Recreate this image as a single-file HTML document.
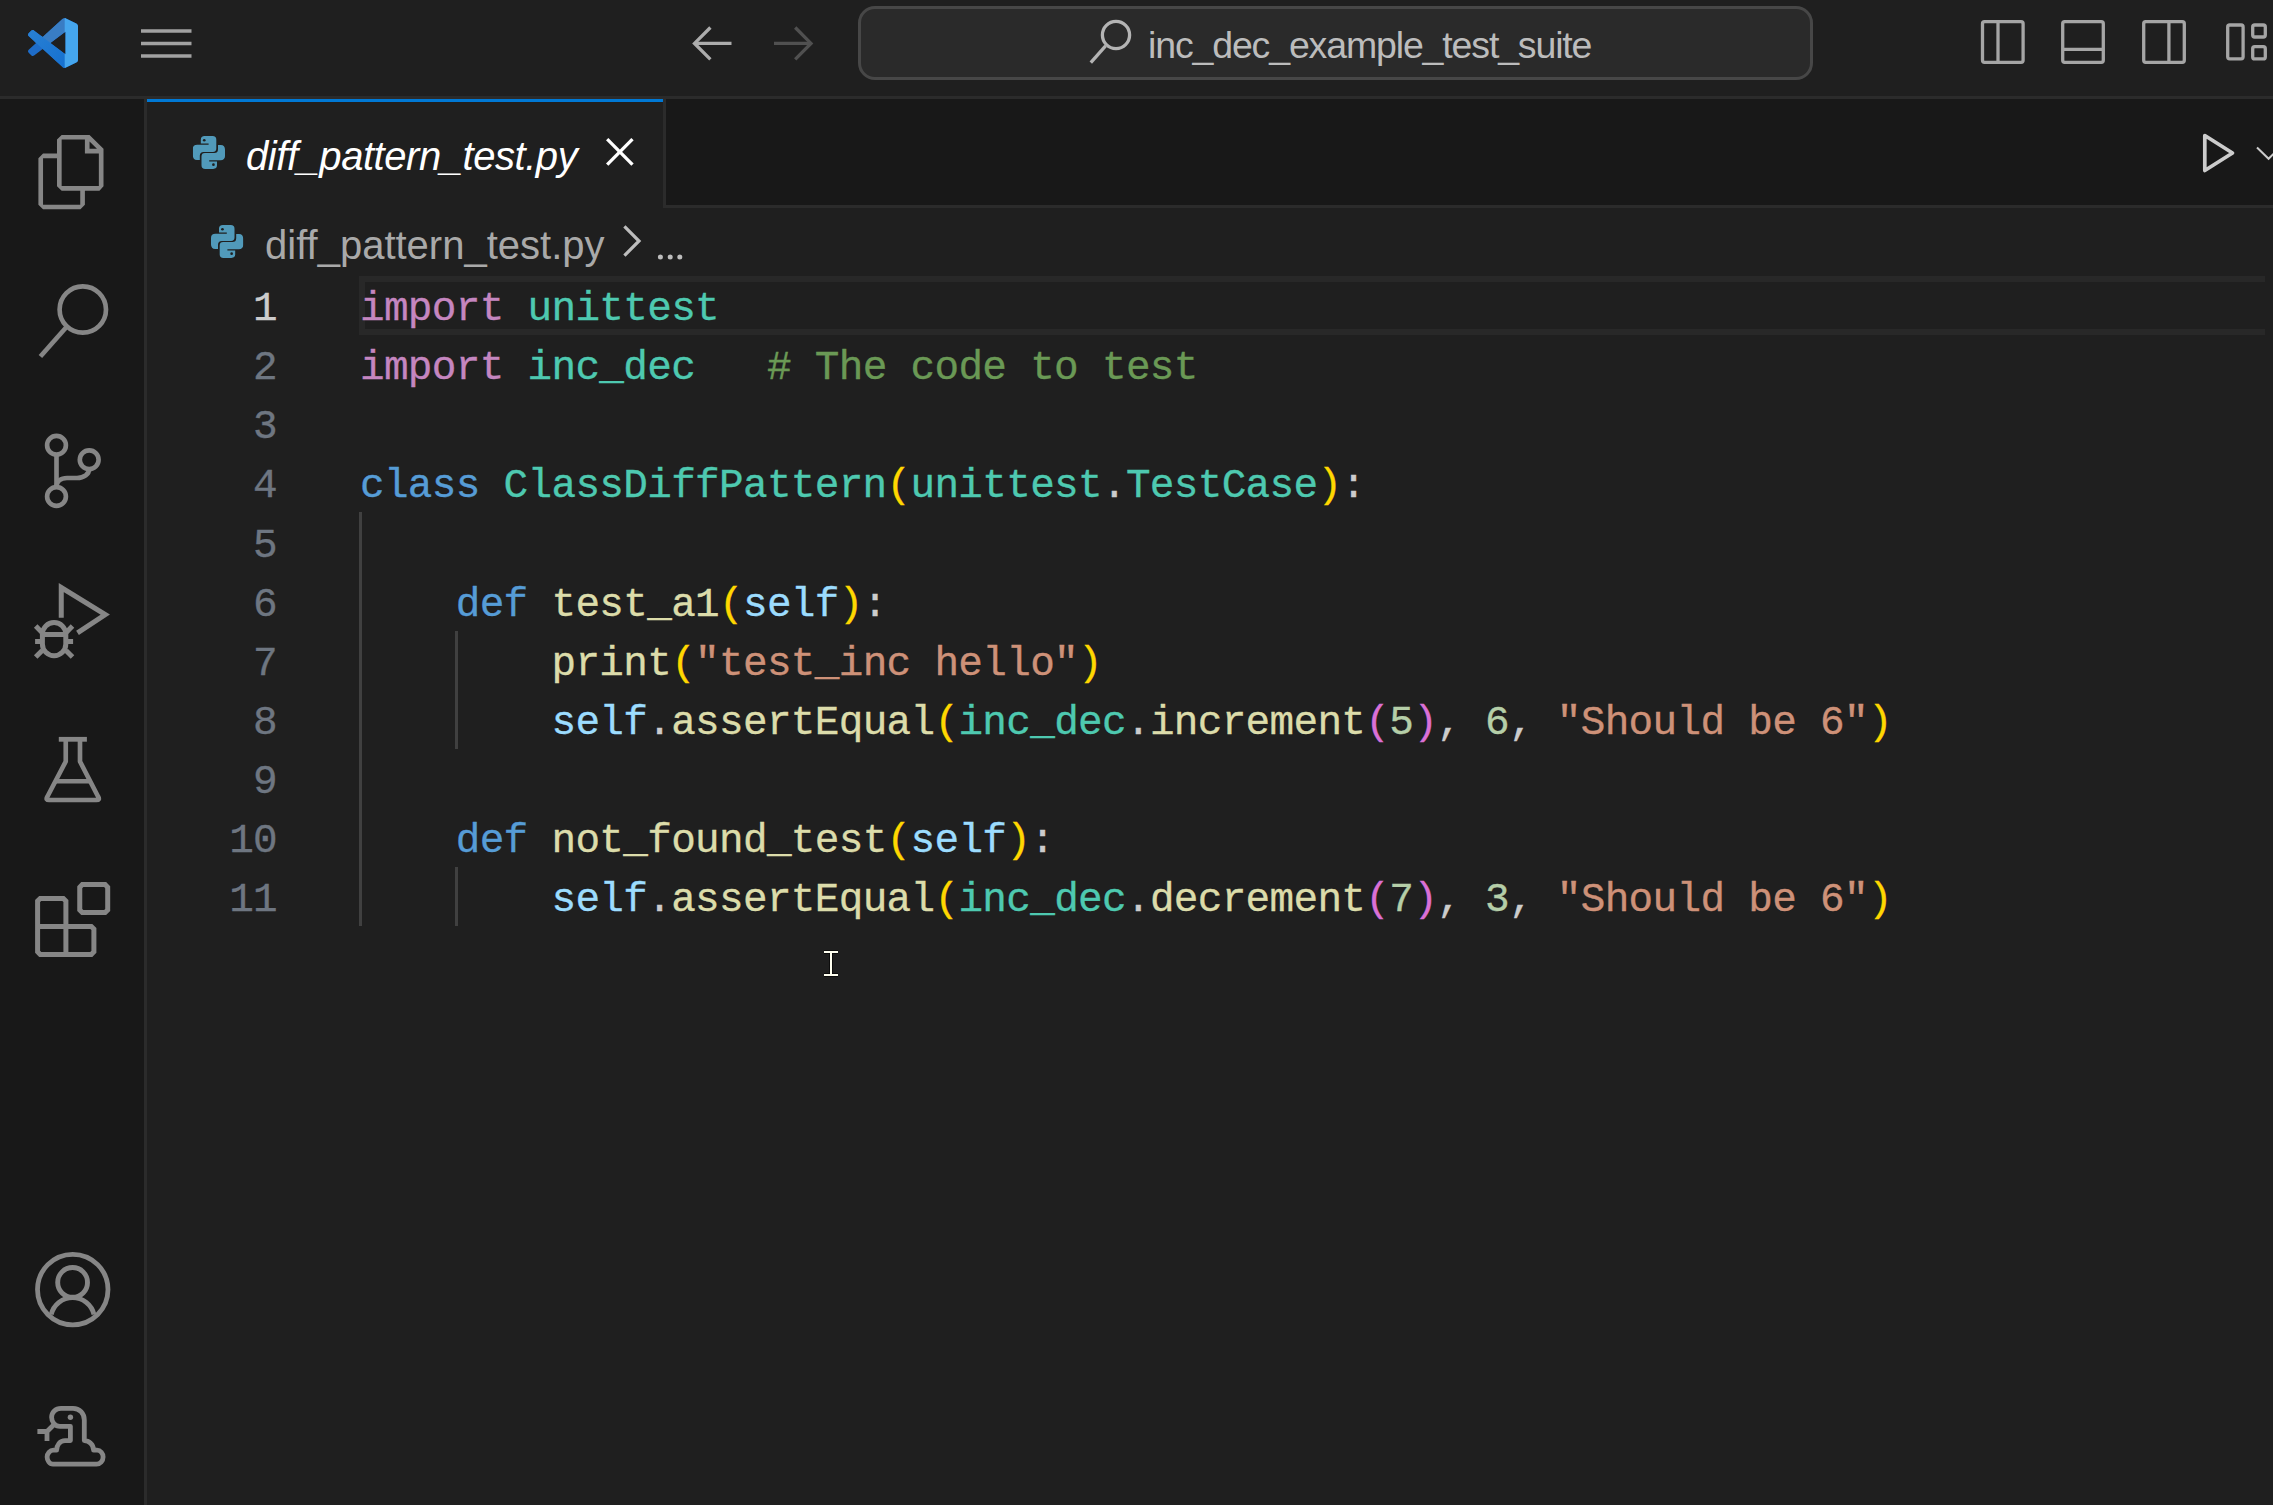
<!DOCTYPE html>
<html><head><meta charset="utf-8">
<style>
html,body{margin:0;padding:0;}
body{width:2273px;height:1505px;overflow:hidden;background:#1f1f1f;position:relative;font-family:"Liberation Sans",sans-serif;}
.abs{position:absolute;}
#titlebar{left:0;top:0;width:2273px;height:96px;background:#1f1f1f;}
#tb-border{left:0;top:96px;width:2273px;height:3px;background:#2b2b2b;}
#actbar{left:0;top:99px;width:144px;height:1406px;background:#181818;}
#act-border{left:144px;top:99px;width:3px;height:1406px;background:#2b2b2b;}
#tabs{left:147px;top:99px;width:2126px;height:106px;background:#181818;}
#tabs-border{left:147px;top:205px;width:2126px;height:3px;background:#2b2b2b;}
#tab{left:147px;top:99px;width:516px;height:109px;background:#1f1f1f;}
#tab-top{left:147px;top:99px;width:516px;height:3px;background:#0078d4;}
#tab-right{left:663px;top:99px;width:3px;height:106px;background:#2b2b2b;}
#search{left:858px;top:6px;width:955px;height:74px;box-sizing:border-box;background:#2a2a2a;border:3px solid #474747;border-radius:17px;}
.ui{white-space:pre;}
.code{-webkit-text-stroke:0.35px;font-family:"Liberation Mono",monospace;font-size:41px;letter-spacing:-0.67px;white-space:pre;color:#cccccc;height:59px;line-height:59px;}
.ln{-webkit-text-stroke:0.35px;font-family:"Liberation Mono",monospace;font-size:41px;letter-spacing:-0.67px;white-space:pre;color:#6e7681;text-align:right;width:200px;line-height:59px;}
.k{color:#c586c0}.m{color:#4ec9b0}.c{color:#6a9955}.b{color:#569cd6}.f{color:#dcdcaa}.p{color:#9cdcfe}.s{color:#ce9178}.n{color:#b5cea8}.y{color:#ffd700}.o{color:#da70d6}
.guide{background:#404040;width:3px;}
</style></head><body>
<div id="titlebar" class="abs"></div>
<div id="tb-border" class="abs"></div>
<div id="actbar" class="abs"></div>
<div id="act-border" class="abs"></div>
<div id="tabs" class="abs"></div>
<div id="tabs-border" class="abs"></div>
<div id="tab" class="abs"></div>
<div id="tab-top" class="abs"></div>
<div id="tab-right" class="abs"></div>
<div id="search" class="abs"></div>

<!-- search text -->
<div class="abs ui" style="left:1148px;top:22.5px;font-size:37.5px;letter-spacing:-1.15px;color:#bcbcbc;line-height:44px;">inc_dec_example_test_suite</div>

<!-- tab text -->
<div class="abs ui" style="left:246px;top:133px;font-size:40px;font-style:italic;letter-spacing:-0.45px;color:#ffffff;line-height:46px;">diff_pattern_test.py</div>

<!-- breadcrumb -->
<div class="abs ui" style="left:265px;top:222px;font-size:40px;color:#a9a9a9;line-height:46px;">diff_pattern_test.py</div>

<!-- current line box -->
<div class="abs" style="left:359px;top:276px;width:1900px;height:47px;border-top:6px solid #282828;border-bottom:6px solid #282828;border-left:6px solid #282828;box-sizing:content-box;"></div>

<!-- line numbers -->
<div class="abs ln" style="left:77px;top:280.00px;color:#cccccc">1</div>
<div class="abs ln" style="left:77px;top:339.14px">2</div>
<div class="abs ln" style="left:77px;top:398.28px">3</div>
<div class="abs ln" style="left:77px;top:457.42px">4</div>
<div class="abs ln" style="left:77px;top:516.56px">5</div>
<div class="abs ln" style="left:77px;top:575.70px">6</div>
<div class="abs ln" style="left:77px;top:634.84px">7</div>
<div class="abs ln" style="left:77px;top:693.98px">8</div>
<div class="abs ln" style="left:77px;top:753.12px">9</div>
<div class="abs ln" style="left:77px;top:812.26px">10</div>
<div class="abs ln" style="left:77px;top:871.40px">11</div>
<div class="abs code" style="left:360px;top:280.00px"><span class="k">import</span> <span class="m">unittest</span></div>
<div class="abs code" style="left:360px;top:339.14px"><span class="k">import</span> <span class="m">inc_dec</span>   <span class="c"># The code to test</span></div>
<div class="abs code" style="left:360px;top:457.42px"><span class="b">class</span> <span class="m">ClassDiffPattern</span><span class="y">(</span><span class="m">unittest</span>.<span class="m">TestCase</span><span class="y">)</span>:</div>
<div class="abs code" style="left:360px;top:575.70px">    <span class="b">def</span> <span class="f">test_a1</span><span class="y">(</span><span class="p">self</span><span class="y">)</span>:</div>
<div class="abs code" style="left:360px;top:634.84px">        <span class="f">print</span><span class="y">(</span><span class="s">"test_inc hello"</span><span class="y">)</span></div>
<div class="abs code" style="left:360px;top:693.98px">        <span class="p">self</span>.<span class="f">assertEqual</span><span class="y">(</span><span class="m">inc_dec</span>.<span class="f">increment</span><span class="o">(</span><span class="n">5</span><span class="o">)</span>, <span class="n">6</span>, <span class="s">"Should be 6"</span><span class="y">)</span></div>
<div class="abs code" style="left:360px;top:812.26px">    <span class="b">def</span> <span class="f">not_found_test</span><span class="y">(</span><span class="p">self</span><span class="y">)</span>:</div>
<div class="abs code" style="left:360px;top:871.40px">        <span class="p">self</span>.<span class="f">assertEqual</span><span class="y">(</span><span class="m">inc_dec</span>.<span class="f">decrement</span><span class="o">(</span><span class="n">7</span><span class="o">)</span>, <span class="n">3</span>, <span class="s">"Should be 6"</span><span class="y">)</span></div>

<!-- indent guides -->
<div class="abs guide" style="left:359px;top:512px;height:414px"></div>
<div class="abs guide" style="left:455px;top:631px;height:118px"></div>
<div class="abs guide" style="left:455px;top:867px;height:59px"></div>

<!-- ICONS -->
<svg class="abs" style="left:0;top:0" width="2273" height="1505" viewBox="0 0 2273 1505">
<defs>
<clipPath id="vsm"><path clip-rule="evenodd" transform="translate(28 18) scale(0.5)" d="M70.9119 99.3171C72.4869 99.9307 74.2828 99.8914 75.8725 99.1264L96.4608 89.2197C98.6242 88.1787 100 85.9892 100 83.5872V16.4133C100 14.0113 98.6243 11.8218 96.4609 10.7808L75.8725 0.873756C73.7862 -0.130129 71.3446 0.11576 69.5135 1.44695C69.252 1.63711 69.0028 1.84943 68.769 2.08341L29.3551 38.0415L12.1872 25.0096C10.589 23.7965 8.35363 23.8959 6.86933 25.2461L1.36303 30.2549C-0.452552 31.9064 -0.454633 34.7627 1.35853 36.417L16.2471 50.0001L1.35853 63.5832C-0.454633 65.2374 -0.452552 68.0938 1.36303 69.7453L6.86933 74.7541C8.35363 76.1043 10.589 76.2037 12.1872 74.9905L29.3551 61.9587L68.769 97.9167C69.3925 98.5406 70.1246 99.0104 70.9119 99.3171ZM75.0152 27.2989L45.1091 50.0001L75.0152 72.7012V27.2989Z"/></clipPath>
<linearGradient id="armb" x1="0" y1="0" x2="1" y2="1"><stop offset="0" stop-color="#2b82d4"/><stop offset="1" stop-color="#1570cf"/></linearGradient>
<symbol id="py" viewBox="0 0 33 33"><path d="M8.1 3.6Q8.1 0 12 0H20Q23.8 0 23.8 3.8V12.6Q23.8 16.1 20.3 16.1H11Q7.1 16.1 7.1 20V24.3H4.2Q0 24.3 0 19.5V13Q0 8.8 4.5 8.8H16V7.4H8.1Z" fill="#519aba"/><path transform="rotate(180 16.3 16.6)" d="M8.1 3.6Q8.1 0 12 0H20Q23.8 0 23.8 3.8V12.6Q23.8 16.1 20.3 16.1H11Q7.1 16.1 7.1 20V24.3H4.2Q0 24.3 0 19.5V13Q0 8.8 4.5 8.8H16V7.4H8.1Z" fill="#519aba"/><circle cx="11.6" cy="4.2" r="1.35" fill="#1f1f1f"/><circle cx="20.9" cy="28.9" r="1.35" fill="#1f1f1f"/></symbol>
</defs>
<!-- VS Code logo -->
<g clip-path="url(#vsm)">
<rect x="28" y="18" width="50" height="50" fill="#1e6cc8"/>
<polygon transform="translate(28 18) scale(0.5)" points="10,50 69,-2 76,-2 75.02,27.3 45.1,50" fill="#397dc4"/>
<polygon transform="translate(28 18) scale(0.5)" points="-5,11.96 75.02,72.7 75.02,103.6 -5,30.6" fill="url(#armb)"/>
<rect x="64.7" y="18" width="14" height="50" fill="#45a6ee"/>
</g>
<!-- hamburger -->
<g stroke="#a2a2a2" stroke-width="3.6">
<line x1="141" y1="31" x2="191.5" y2="31"/><line x1="141" y1="43.5" x2="191.5" y2="43.5"/><line x1="141" y1="56" x2="191.5" y2="56"/>
</g>
<!-- back / forward -->
<g fill="none" stroke-width="3.3">
<polyline points="710.4,27.5 694.5,43.4 710.4,59.3" stroke="#acacac"/><line x1="695" y1="43.4" x2="731.5" y2="43.4" stroke="#acacac"/>
<polyline points="795.2,27.5 811,43.4 795.2,59.3" stroke="#505050"/><line x1="774" y1="43.4" x2="810.5" y2="43.4" stroke="#505050"/>
</g>
<!-- search icon -->
<g fill="none" stroke="#b4b4b4" stroke-width="3.3">
<circle cx="1116" cy="35" r="13.6"/><line x1="1090.8" y1="62.6" x2="1105.6" y2="45.8"/>
</g>
<!-- layout icons -->
<g fill="none" stroke="#a5a5a5" stroke-width="3.3" stroke-linejoin="round">
<rect x="1982.5" y="21.7" width="40.6" height="40.6" rx="2"/><line x1="1998" y1="21.7" x2="1998" y2="62.3"/>
<rect x="2062.7" y="21.7" width="40.6" height="40.6" rx="2"/><line x1="2062.7" y1="49.4" x2="2103.3" y2="49.4"/>
<rect x="2143.7" y="21.7" width="40.6" height="40.6" rx="2"/><line x1="2168.9" y1="21.7" x2="2168.9" y2="62.3"/>
<rect x="2227.7" y="25" width="15.4" height="33.8" rx="2"/>
<rect x="2252.7" y="25" width="12.6" height="12" rx="2"/>
<rect x="2252.7" y="46.7" width="12.6" height="12.2" rx="2"/>
</g>
<!-- tab python icon -->
<use href="#py" x="192.8" y="135.8" width="32.6" height="33.2"/>
<!-- breadcrumb python icon -->
<use href="#py" x="211" y="224.8" width="32.6" height="33.2"/>
<!-- tab close -->
<g stroke="#ffffff" stroke-width="3.3"><line x1="607.2" y1="139.2" x2="632.5" y2="164.6"/><line x1="632.5" y1="139.2" x2="607.2" y2="164.6"/></g>
<!-- breadcrumb chevron + dots -->
<polyline points="624.4,226.4 639,241 624.4,255.6" fill="none" stroke="#bdbdbd" stroke-width="3.2"/>
<g fill="#bdbdbd"><circle cx="660.4" cy="257" r="2.5"/><circle cx="670.2" cy="257" r="2.5"/><circle cx="679.8" cy="257" r="2.5"/></g>
<!-- run button -->
<path d="M2204.8,135.5 L2232.5,153 L2204.8,170.5 Z" fill="none" stroke="#cccccc" stroke-width="3.7" stroke-linejoin="round"/>
<polyline points="2257,147.5 2268.6,158.8 2280,147.5" fill="none" stroke="#cccccc" stroke-width="2"/>
<!-- activity bar icons -->
<g fill="#868686" fill-rule="evenodd">
<path transform="translate(35.3 134.9) scale(3.1)" d="M17.5 0h-9L7 1.5V6H2.5L1 7.5v15.07L2.5 24h12.07L16 22.57V18h4.7l1.3-1.43V4.5L17.5 0zm0 2.12l2.38 2.38H17.5V2.12zm-3 20.38h-12v-15H7v9.07L8.5 18h6v4.5zm6-6h-12v-15H16V6h4.5v10.5z"/>
</g>
<g fill="none" stroke="#868686" stroke-width="4.65">
<!-- search -->
<circle cx="82.8" cy="309.5" r="23.2"/><line x1="40.4" y1="356.5" x2="66.5" y2="327"/>
<!-- source control -->
<circle cx="56.5" cy="445.3" r="9.4"/><circle cx="89.2" cy="459.7" r="9.4"/><circle cx="56.5" cy="496.5" r="9.4"/>
<line x1="56.5" y1="454.7" x2="56.5" y2="487.1"/>
<path d="M56.5,487 C56.5,481 61,478 67,478 H77 C84,478 89.2,474 89.2,469"/>
<!-- flask -->
<line x1="58.8" y1="739.3" x2="86.9" y2="739.3" stroke-width="4.8"/>
<path d="M65.75,740 V761.5 L47.2,797 Q45.5,800 49,800 H96.5 Q100,800 98.3,797 L80,761.5 V740" stroke-linejoin="round"/>
<line x1="55.5" y1="781.2" x2="90.5" y2="781.2" stroke-width="4.5"/>
<!-- extensions -->
<path d="M37.6,901 L40.2,898.4 H63.3 L65.9,901 V926.4 H91.3 L93.9,929 V951.8 L91.3,954.4 H40.2 L37.6,951.8 Z M37.6,926.4 H65.9 V954.4" stroke-width="5"/>
<path d="M82.3,884.6 H105.1 L107.7,887.2 V910 L105.1,912.6 H82.3 L79.75,910 V887.2 Z" stroke-width="5"/>
<!-- account -->
<circle cx="72.75" cy="1289.55" r="35.25" stroke-width="4.8"/>
<circle cx="72.6" cy="1282.4" r="14.9" stroke-width="4.9"/>
<path d="M51.2,1314.5 A22 22 0 0 1 94,1314.5" stroke-width="4.9"/>
<!-- snake -->
<path d="M70.4,1440.6 V1426.3 H60 C55,1426.3 51.6,1422 51.6,1417.3 C51.6,1412.3 55.5,1408.3 61,1408.3 H73 C79.5,1408.3 84.3,1413.5 84.3,1420 V1440.6 C88.8,1440.6 93.6,1444.5 93.6,1450.2 H97 C100.5,1450.2 103.1,1453.5 103.1,1457 C103.1,1461 100,1464.2 96.5,1464.2 H53 C49.5,1464.2 47.1,1460.5 47.1,1457 C47.1,1453.5 49.8,1450.2 53.5,1450.2 H56.6 C56.6,1445 60,1440.6 65,1440.6 Z" stroke-width="4.8" stroke-linejoin="round"/>
<path d="M53.8,1424.8 L47,1431.5 H37.4 M47,1431.5 V1441" stroke-width="4.8"/>
</g>
<circle cx="70.4" cy="1417.3" r="2.7" fill="#868686"/>
<!-- debug icon -->
<g fill="none" stroke="#868686" stroke-width="5">
<path d="M61.25,617.8 V587.5 L105.3,614.5 L77.5,632.8" stroke-linejoin="miter"/>
<path d="M42.4,634.2 A11.7,11.7 0 0 1 65.8,634.2 V644 A11.7,11.7 0 0 1 42.4,644 Z M42.4,634.5 H65.8"/>
<path d="M35.7,626.1 L42,632.4 M35.1,641.4 H41 M35.7,656.9 L42.2,650.4 M72.5,626.1 L66.2,632.4 M73.1,641.4 H67.2 M72.5,656.9 L66,650.4"/>
</g>
<!-- mouse I-beam -->
<g stroke="#000" stroke-width="3.2"><line x1="824" y1="952" x2="838" y2="952"/><line x1="831" y1="952" x2="831" y2="975"/><line x1="824" y1="975" x2="838" y2="975"/></g>
<g stroke="#fffff0" stroke-width="2"><line x1="824" y1="952" x2="838" y2="952"/><line x1="831" y1="952" x2="831" y2="975"/><line x1="824" y1="975" x2="838" y2="975"/></g>
</svg>
<!-- /ICONS -->
</body></html>
